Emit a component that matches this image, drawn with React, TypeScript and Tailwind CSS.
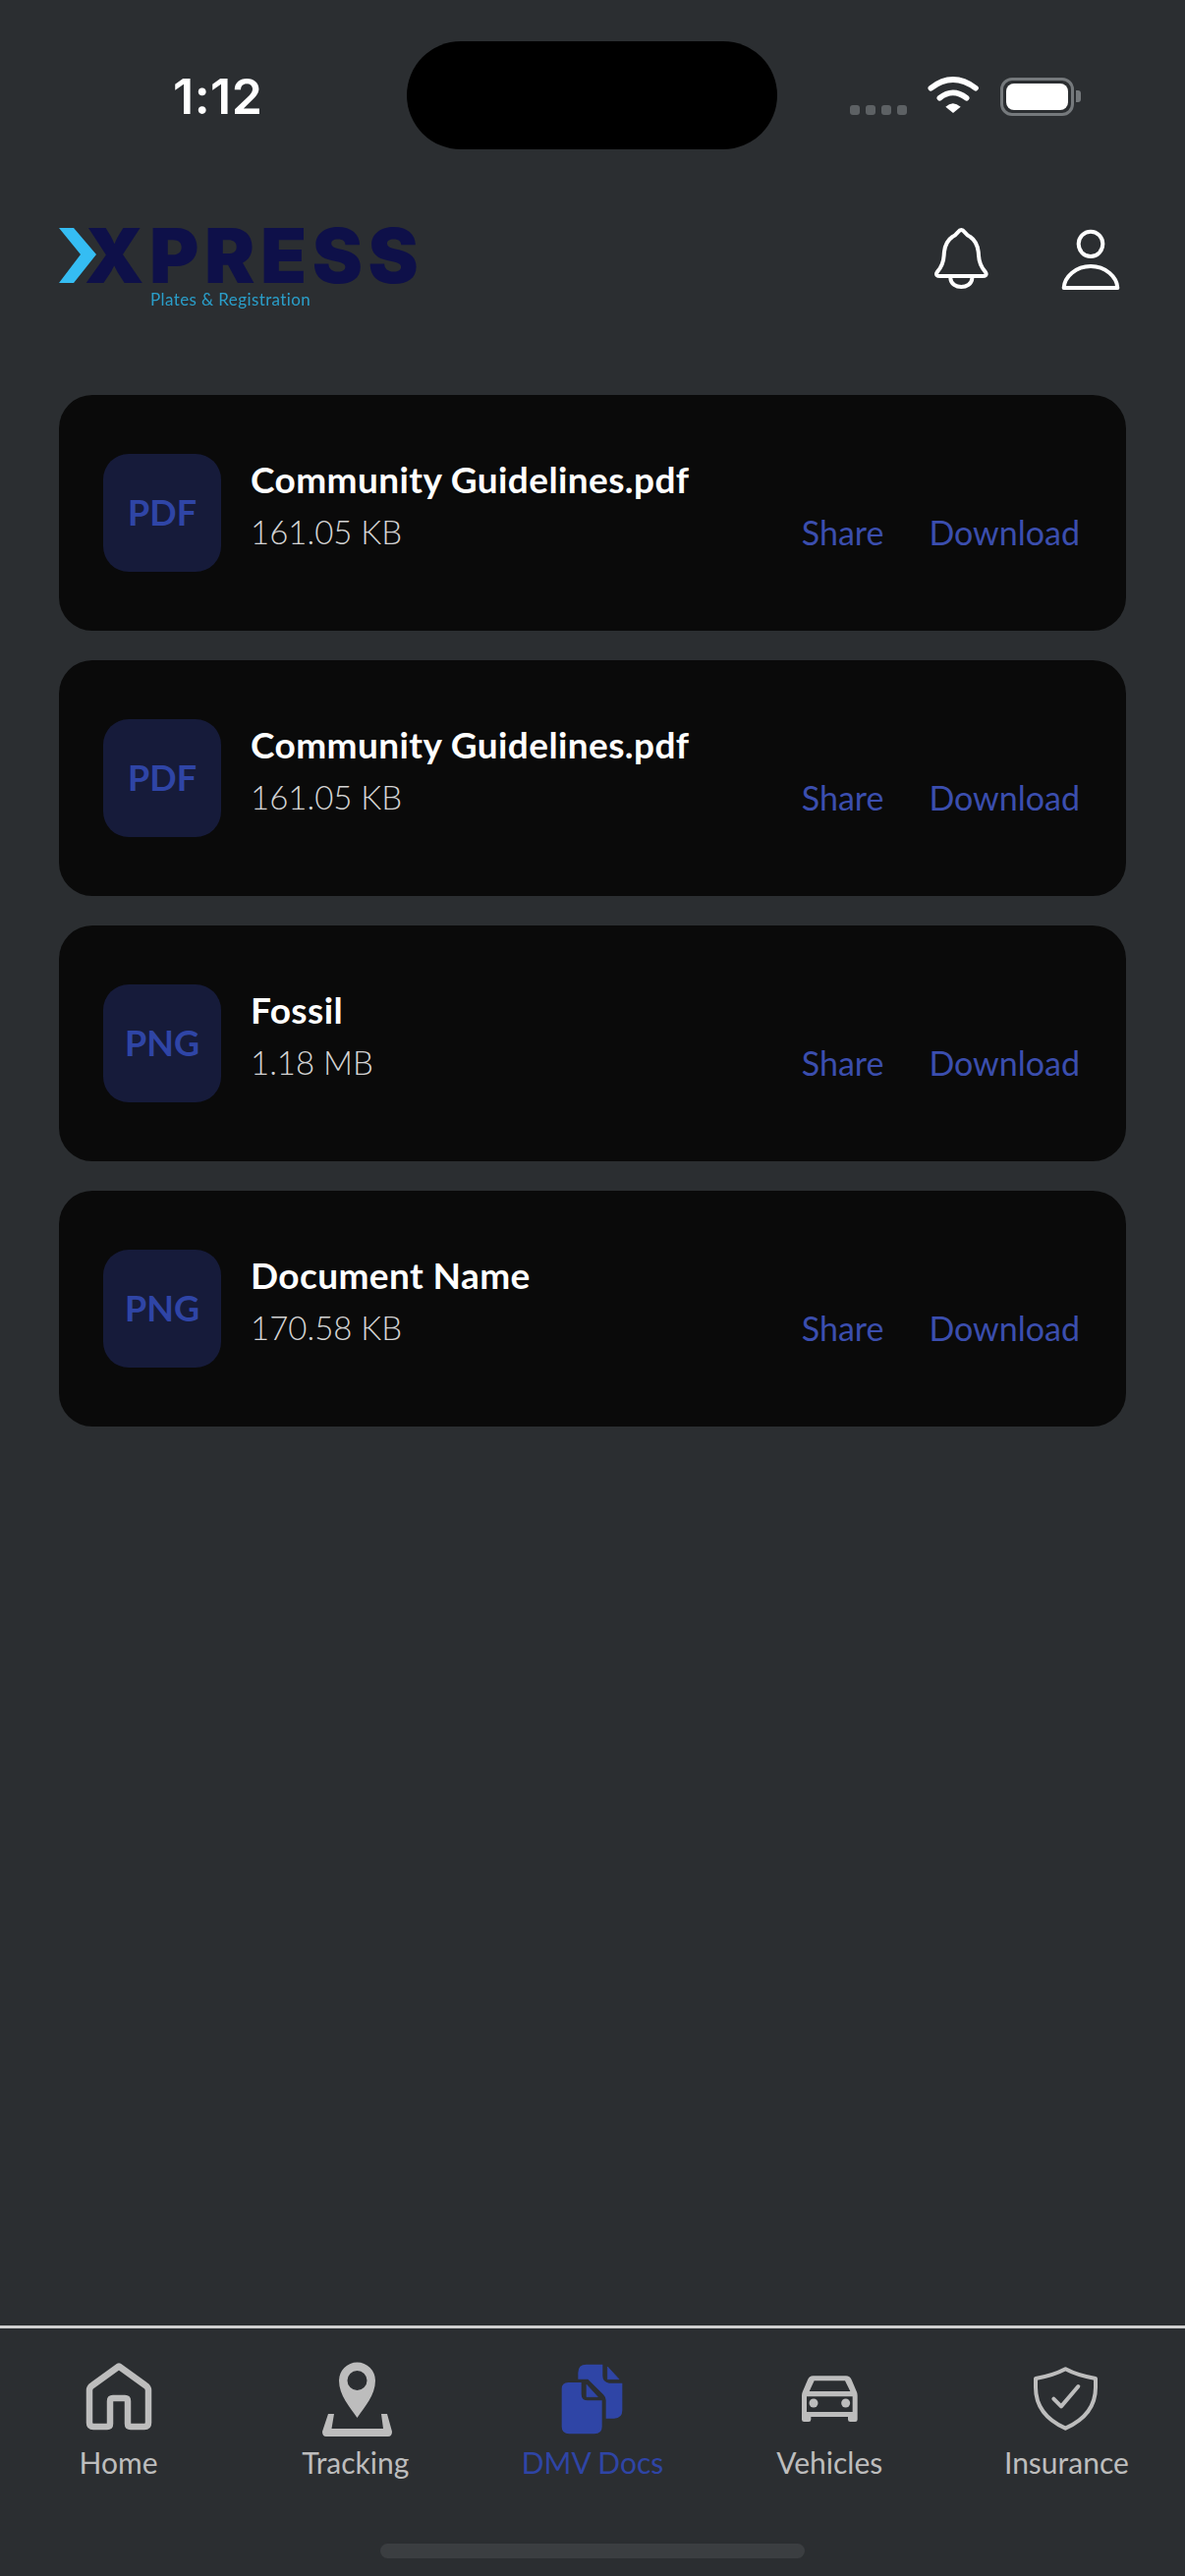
const FONT = "font-['Lato','Noto_Sans',sans-serif]";

const files = [
  { type: "PDF", name: "Community Guidelines.pdf", size: "161.05 KB" },
  { type: "PDF", name: "Community Guidelines.pdf", size: "161.05 KB" },
  { type: "PNG", name: "Fossil", size: "1.18 MB" },
  { type: "PNG", name: "Document Name", size: "170.58 KB" },
];

function StatusBar() {
  return (
    <div className="flex h-[110px] mt-[42px]">
      <div className="w-[414px] pl-[176px] pt-[31px]">
        <div className="font-['Inter',sans-serif] font-semibold text-[50px] leading-[50px] tracking-[0.5px] text-white">1:12</div>
      </div>
      <div className="w-[377px] h-[110px] rounded-[55px] bg-black" />
      <div className="flex pl-[74px] pt-[36px]">
        <div className="flex gap-[6px] pt-[29px] h-[40px]">
          {[0, 1, 2, 3].map((i) => (
            <div key={i} className="w-[10px] h-[10px] rounded-[3px] bg-[#5d6164]" />
          ))}
        </div>
        <svg className="ml-[21px] w-[54px] h-[40px]" viewBox="283 57 162 120">
          <path d="M293 92 Q360 40 430 92" fill="none" stroke="#fff" strokeWidth="17" strokeLinecap="round" />
          <path d="M320 122 Q360 90 402 122" fill="none" stroke="#fff" strokeWidth="17" strokeLinecap="round" />
          <path d="M338 149 Q360 128 384 149 L361 168 Z" fill="#fff" />
        </svg>
        <div className="ml-[20px] flex items-center h-[40px]">
          <div className="w-[75px] h-[39px] rounded-[12px] border-[3px] border-[#75797c] p-[3px]">
            <div className="w-full h-full rounded-[8px] bg-white" />
          </div>
          <div className="ml-[2px] w-[5px] h-[12px] rounded-r-[3px] bg-[#75797c]" />
        </div>
      </div>
    </div>
  );
}

function Logo() {
  return (
    <div className="flex flex-col blur-[0.5px]">
      <div className="flex items-center h-[58px] mt-[6px]">
        <svg className="w-[40px] h-[56px] shrink-0" viewBox="0 0 40 56">
          <path d="M0 0H15L38 27L15 56H0L22 27Z" fill="#35bdf3" />
        </svg>
        <div className="font-['Inter',sans-serif] font-black text-[77px] leading-[58px] text-[#0e1049] ml-[-14px] tracking-[5.5px]">XPRESS</div>
      </div>
      <div className="ml-[93px] mt-[8px] font-['Lato',sans-serif] text-[17px] leading-[15px] tracking-[0.4px] text-[#2a9ec9]">Plates &amp; Registration</div>
    </div>
  );
}

function Header() {
  return (
    <div className="flex justify-between items-start mt-[73px] h-[85px] pl-[60px] pr-[61px]">
      <Logo />
      <div className="flex gap-[60px]">
        <svg className="w-[70px] h-[75px]" viewBox="45 15 210 225" fill="none" stroke="#fff" strokeWidth="12" strokeLinecap="round" strokeLinejoin="round">
          <path d="M145 42C135 42 135 55 118 63C100 75 93 95 92 120C91 140 85 155 72 170C65 180 72 183 80 183H210C218 183 225 180 218 170C205 155 199 140 198 120C197 95 190 75 172 63C155 55 155 42 145 42Z" />
          <path d="M112 190C115 225 175 225 178 190" />
        </svg>
        <svg className="w-[70px] h-[75px]" viewBox="435 15 210 225" fill="none" stroke="#fff" strokeWidth="12" strokeLinecap="round" strokeLinejoin="round">
          <ellipse cx="540" cy="85" rx="37" ry="38" />
          <path d="M458 219C460 185 495 153 540 153C585 153 620 185 622 219Z" />
        </svg>
      </div>
    </div>
  );
}

function FileCard({ type, name, size }: { type: string; name: string; size: string }) {
  return (
    <div className={`flex items-center h-[240px] rounded-[34px] bg-[#0a0a0a] pl-[45px] pr-[47px] ${FONT}`}>
      <div className="flex items-center justify-center w-[120px] h-[120px] rounded-[26px] bg-[#161b3a] shrink-0 pb-[2px]">
        <span className="text-[36px] font-bold leading-none text-[#2f45a6]">{type}</span>
      </div>
      <div className="ml-[30px] flex flex-col gap-[11px] grow pb-[15px]">
        <div className="text-[37px] font-bold leading-[42px] tracking-[0.4px] text-white">{name}</div>
        <div className="text-[33px] font-light leading-[42px] text-[#d4d4d4]">{size}</div>
      </div>
      <div className="flex gap-[46px] self-end pb-[79px] text-[34px] leading-[42px] font-normal text-[#3b4eae]">
        <span>Share</span>
        <span>Download</span>
      </div>
    </div>
  );
}

function HomeIcon() {
  return (
    <svg className="w-[100px] h-[84px]" viewBox="0 0 100 84" fill="none" stroke="#bdbdbd" strokeWidth="6.5" strokeLinejoin="round">
      <path d="M50 8.5L77 28Q80 30 80 33V66Q80 70 76 70H62Q59 70 59 67V44Q59 41 56 41H44Q41 41 41 44V67Q41 70 38 70H24Q20 70 20 66V33Q20 30 23 28Z" />
    </svg>
  );
}

function TrackingIcon() {
  return (
    <svg className="w-[100px] h-[84px]" viewBox="0 0 100 84" fill="#bdbdbd">
      <path fillRule="evenodd" d="M51.5 61C44 50 33 38 33 23A18.5 18.5 0 0 1 70 23C70 38 59 50 51.5 61ZM51.5 13A10 10 0 1 0 51.5 33A10 10 0 1 0 51.5 13Z" />
      <path d="M22 57H28L25.5 72H78L76 57H82L87 75Q87 80 83 80H20Q16 80 16 75Z" />
    </svg>
  );
}

function DocsIcon() {
  return (
    <svg className="w-[100px] h-[84px]" viewBox="9 30 300 252" fill="#2f45a6">
      <path d="M65 125Q65 105 85 105H125V140Q125 160 145 160H188V240Q188 262 165 262H88Q65 262 65 240Z" />
      <path d="M141 112L175 149H141Z" strokeLinejoin="round" stroke="#2f45a6" strokeWidth="2" />
      <path d="M115 95V75Q115 50 140 50H190V85Q190 105 210 107H250V190Q250 215 225 215H200V160Q200 150 192 142L145 95Z" />
      <path d="M205 57L240 95H205Z" strokeLinejoin="round" stroke="#2f45a6" strokeWidth="2" />
    </svg>
  );
}

function CarIcon() {
  return (
    <svg className="w-[100px] h-[84px]" viewBox="12 0 300 252" fill="#bdbdbd">
      <path fillRule="evenodd" d="M112 55H213Q225 55 230 67L245 102Q248 108 248 115V188Q248 195 241 195H226Q219 195 219 188V180H106V188Q106 195 99 195H85Q78 195 78 188V115Q78 108 81 102L96 67Q101 55 112 55ZM116 70L101 102H226L210 70ZM93 118V165H233V118Z" />
      <circle cx="114" cy="138" r="13.5" />
      <circle cx="212" cy="138" r="13.5" />
    </svg>
  );
}

function ShieldIcon() {
  return (
    <svg className="w-[100px] h-[84px]" viewBox="738 0 300 252" fill="none" stroke="#bdbdbd" strokeWidth="12" strokeLinecap="round" strokeLinejoin="round">
      <path d="M886 34C860 48 825 58 795 63V90C795 150 830 190 886 215C942 190 978 150 978 90V63C948 58 912 48 886 34Z" />
      <path d="M850 125L873 148L925 87" />
    </svg>
  );
}

function BottomNav() {
  const items = [
    { label: "Home", icon: <HomeIcon />, active: false },
    { label: "Tracking", icon: <TrackingIcon />, active: false },
    { label: "DMV Docs", icon: <DocsIcon />, active: true },
    { label: "Vehicles", icon: <CarIcon />, active: false },
    { label: "Insurance", icon: <ShieldIcon />, active: false },
  ];
  return (
    <div className={`mt-auto border-t-[3px] border-[#cfcfcf] pt-[30px] ${FONT}`}>
      <div className="grid grid-cols-5">
        {items.map((it) => (
          <div key={it.label} className="flex flex-col items-center">
            {it.icon}
            <div className={`mt-[4px] text-[30px] leading-[36px] ${it.active ? "text-[#2f45a6]" : "text-[#bdbdbd]"}`}>{it.label}</div>
          </div>
        ))}
      </div>
      <div className="mx-auto mt-[65px] mb-[18px] w-[432px] h-[15px] rounded-full bg-[#3b3e41]" />
    </div>
  );
}

export default function App() {
  return (
    <div className="flex flex-col w-[1206px] h-[2622px] bg-[#2b2e31] overflow-hidden">
      <StatusBar />
      <Header />
      <div className="flex flex-col gap-[30px] mx-[60px] mt-[92px]">
        {files.map((f, i) => (
          <FileCard key={i} {...f} />
        ))}
      </div>
      <BottomNav />
    </div>
  );
}
